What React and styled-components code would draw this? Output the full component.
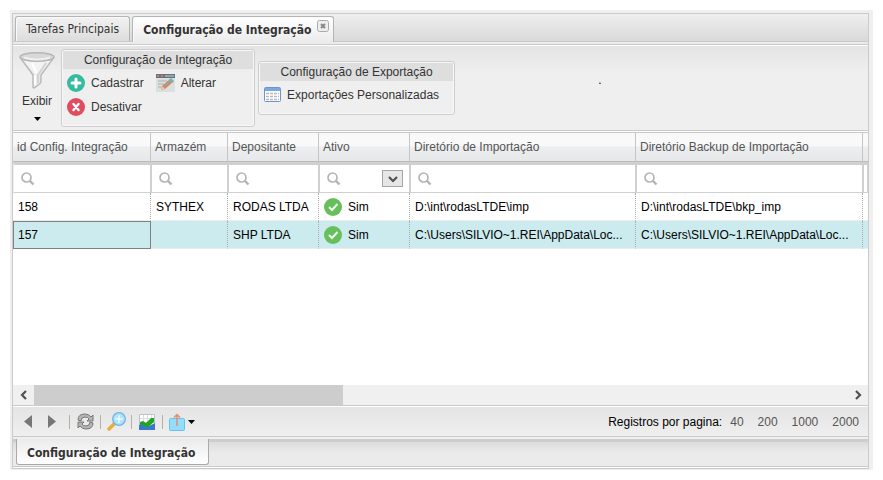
import React from "react";
import styled, { createGlobalStyle, css } from "styled-components";

const GlobalStyle = createGlobalStyle`
  * {
    box-sizing: border-box;
  }
  body {
    margin: 0;
    background: #fff;
    color: #333;
    font: 12px/16px "Liberation Sans", Arial, sans-serif;
  }
  button, input, select {
    font: inherit;
    color: inherit;
  }
`;

const tabFont = css`
  font-family: "DejaVu Sans Condensed", "DejaVu Sans", Tahoma, sans-serif;
  font-size: 12px;
`;

const Page = styled.div`
  display: flex;
  min-height: 100vh;
  padding: 10px;
`;

const Frame = styled.div`
  display: flex;
  flex: 1;
  min-width: 0;
  padding: 3px 4px 1px 2px;
  background: #efefef;
`;

const Panel = styled.main`
  display: flex;
  flex: 1;
  flex-direction: column;
  min-width: 0;
  border: 1px solid #cacaca;
`;

const TabBar = styled.nav`
  display: flex;
  align-items: flex-end;
  gap: 2px;
  height: 31px;
  padding: 0 2px 2px;
  border-bottom: 1px solid #cacaca;
  background: linear-gradient(#efefef, #d9d9d9 27px, #cacaca 27px, #cacaca 28px, #ebebeb 28px);
`;

const Tab = styled.button`
  ${tabFont}
  display: flex;
  align-items: center;
  gap: 6px;
  height: 25px;
  margin-bottom: 1px;
  padding: 0 10px;
  border: 1px solid #b4b4b4;
  border-bottom: 0;
  border-radius: 3px 3px 0 0;
  background: linear-gradient(#f2f2f2, #dcdcdc);
  box-shadow: inset 1px 1px #fafafa;
  white-space: nowrap;
  ${(props) =>
    props.$active &&
    css`
      height: 26px;
      margin-bottom: 0;
      padding: 0 4px 0 10px;
      background: linear-gradient(#fff, #ebebeb);
      font-weight: bold;
    `}
`;

const CloseIcon = styled.svg`
  width: 12px;
  height: 12px;
  margin-bottom: 7px;
`;

const Toolbar = styled.div`
  display: flex;
  align-items: center;
  gap: 3px;
  height: 86px;
  padding: 0 6px;
  border-bottom: 1px solid #cacaca;
  background: linear-gradient(#fff 1px, #e4e4e4 1px, #efefef 28px);
`;

const ShowButton = styled.button`
  display: flex;
  flex-direction: column;
  align-items: center;
  gap: 4px;
  margin-right: 3px;
  padding: 0 0 2px;
  border: 0;
  background: none;
`;

const ShowLabel = styled.span`
  margin-bottom: 4px;
`;

const Group = styled.fieldset`
  min-width: 0;
  margin: 0;
  padding: 1px;
  border: 1px solid #cdcdcd;
  border-radius: 3px;
  box-shadow: inset 0 0 0 1px #f8f8f8;
`;

const GroupTitle = styled.div`
  height: 18px;
  background: #dedede;
  line-height: 18px;
  text-align: center;
`;

const GroupBody = styled.div`
  display: grid;
  grid-template-columns: ${(props) => props.$columns};
  gap: 4px 12px;
  padding: 4px ${(props) => props.$end} 8px 4px;
`;

const ToolButton = styled.button`
  display: flex;
  align-items: center;
  gap: 6px;
  height: 20px;
  padding: 0;
  border: 0;
  background: none;
  white-space: nowrap;
`;

const Note = styled.span`
  margin-left: 140px;
  padding-bottom: 16px;
  color: #000;
`;

const Grid = styled.div`
  flex: 1;
  min-height: 180px;
  border-top: 1px solid #cacaca;
  box-shadow: 0 -1px #fff;
  margin-top: 1px;
  overflow: hidden;
  background: #fff;
`;

const Table = styled.table`
  width: 100%;
  table-layout: fixed;
  border-collapse: separate;
  border-spacing: 0;
`;

const HeadCell = styled.th`
  height: 29px;
  padding: 0 4px;
  border-right: 1px solid #c5c5c5;
  border-bottom: 1px solid #bcbcbc;
  background: linear-gradient(#f9f9f9 45%, #eceef0 50%, #e6e8ea);
  color: #555;
  font-weight: normal;
  text-align: left;
  white-space: nowrap;
  overflow: hidden;
  &:last-child {
    border-right: 0;
  }
`;

const FilterCell = styled.td`
  height: 31px;
  padding: 0;
  border: 1px solid #d0d0d0;
  border-width: 3px 1px 1px;
  &:first-child {
    border-left-color: #efefef;
  }
`;

const FilterBox = styled.label`
  display: flex;
  align-items: center;
  padding: 0 6px 0 7px;
`;

const FilterInput = styled.input`
  flex: 1;
  width: 0;
  min-width: 0;
  height: 20px;
  padding: 0 2px;
  border: 0;
  background: none;
  outline: 0;
`;

const FilterMenu = styled.button`
  width: 21px;
  height: 17px;
  padding: 0;
  border: 1px solid #a5a5a5;
  background: #e6e6e6;
  line-height: 0;
`;

const Row = styled.tr`
  background: ${(props) => (props.$selected ? "#cbebee" : "#fff")};
  color: #000;
`;

const Cell = styled.td`
  height: 28px;
  padding: 0 4px 0 5px;
  border-right: 1px dotted #aaa;
  border-bottom: 1px solid #ededed;
  overflow: hidden;
  white-space: nowrap;
  &:last-child {
    border-right: 0;
  }
  ${(props) =>
    props.$focused &&
    css`
      outline: 1px solid #808080;
      outline-offset: -1px;
    `}
`;

const Status = styled.div`
  display: flex;
  align-items: center;
  gap: 6px;
`;

const ScrollBar = styled.div`
  display: flex;
  justify-content: space-between;
  height: 20px;
  background: #f0f0f0;
`;

const ScrollButton = styled.button`
  width: 21px;
  padding: 0;
  border: 0;
  background: none;
  line-height: 0;
`;

const ScrollTrack = styled.div`
  flex: 1;
`;

const ScrollThumb = styled.div`
  width: 38%;
  height: 100%;
  background: #cdcdcd;
`;

const Footer = styled.footer`
  display: flex;
  align-items: center;
  height: 32px;
  padding: 1px 9px 0 8px;
  border: 1px solid #cacaca;
  border-width: 1px 0;
  background: linear-gradient(#fff 1px, #e4e4e4 1px, #efefef);
`;

const PageArrows = styled.div`
  display: flex;
  gap: 10px;
  margin-right: 5px;
`;

const IconButton = styled.button`
  display: flex;
  align-items: center;
  justify-content: center;
  gap: 2px;
  width: ${(props) => props.$width || 20}px;
  height: 22px;
  padding: 0;
  border: 0;
  background: none;
`;

const Separator = styled.i`
  width: 1px;
  height: 14px;
  margin: 0 5px;
  background: #b5b2a4;
`;

const Pager = styled.div`
  display: flex;
  gap: 8px;
  margin-left: auto;
  color: #000;
`;

const PageSizes = styled.div`
  display: flex;
  gap: 14px;
`;

const PageSize = styled.a`
  color: #555;
  text-decoration: none;
`;

const BottomTabs = styled.nav`
  display: flex;
  align-items: flex-start;
  height: 28px;
  margin: 2px 0 1px;
  padding: 0 3px;
  border-bottom: 1px solid #cacaca;
  background: linear-gradient(#cdcdcd 3px, #dcdcdc 3px, #ebebeb 14px);
  box-shadow: 0 1px #fff;
`;

const BottomTab = styled.button`
  ${tabFont}
  height: 26px;
  padding: 3px 13px 0 10px;
  border: 1px solid #aaa;
  border-top: 0;
  border-radius: 0 0 3px 3px;
  background: linear-gradient(#ebebeb, #fff);
  font-weight: bold;
  white-space: nowrap;
`;

const Funnel = () => (
  <svg width="36" height="37" viewBox="0 0 36 37">
    <path d="M1.500 6 14 23v12.500q1 1 2 0l5-4q1-1 1-2V23L34.500 6Z" fill="#e8e8e8" stroke="#b9b9b9" strokeWidth="1.400" />
    <path d="M5 9 16 22h5L31 9" fill="#f3f3f3" />
    <path d="M13 11 18 22M16 23v10" fill="none" stroke="#fff" strokeWidth="2" />
    <path d="m27 11-8 12v8" fill="none" stroke="#d3d3d3" strokeWidth="2" />
    <ellipse cx="18" cy="5" rx="17" ry="4.300" fill="#d8d8d8" stroke="#b5b5b5" strokeWidth="1.400" />
    <path d="M5 5.500q13 4 26 0" fill="none" stroke="#efefef" strokeWidth="2" />
  </svg>
);

const Caret = () => (
  <svg width="7" height="4" viewBox="0 0 7 4">
    <path d="M0 0h7L3.500 4Z" fill="#000" />
  </svg>
);

const AddIcon = () => (
  <svg width="18" height="18" viewBox="0 0 18 18">
    <circle cx="9" cy="9" r="9" fill="#35bba0" />
    <path d="M9 5v8M5 9h8" stroke="#fff" strokeWidth="3" strokeLinecap="round" />
  </svg>
);

const DisableIcon = () => (
  <svg width="18" height="18" viewBox="0 0 18 18">
    <circle cx="9" cy="9" r="9" fill="#df4d60" />
    <path d="m6.500 6 5 6m0-6-5 6" stroke="#fff" strokeWidth="2.400" strokeLinecap="round" />
  </svg>
);

const EditIcon = () => (
  <svg width="19" height="18" viewBox="0 0 19 18">
    <path d="M0 0h19v18H0Z" fill="#dadfdf" />
    <path d="M0 0h19v4H0Z" fill="#69737d" />
    <path d="M1 2h2M5 2h2" stroke="#d9776c" strokeWidth="2" />
    <path d="M9 2h9" stroke="#8fa7ab" strokeWidth="2" />
    <path d="M2 7h9M2 10h6M2 13h4" stroke="#a5b3b3" />
    <path d="m5 16 1-4 8-7 3 3-8 7Z" fill="#ea7d50" />
    <path d="m8 13 7-7" stroke="#6fb7b3" strokeWidth="1.500" />
    <path d="m5 16 1-4 3 3Z" fill="#f1c9a5" />
    <path d="m13 6 2-2 3 3-2 2Z" fill="#6fb7b3" />
  </svg>
);

const TableIcon = () => (
  <svg width="17" height="15" viewBox="0 0 17 15">
    <rect x=".5" y=".5" width="16" height="14" rx="1" fill="#fff" stroke="#6c94d0" />
    <path d="M1 1h15v3H1Z" fill="#7da6e0" />
    <path d="M2 6.500h13M2 9.500h13M2 12.500h13" stroke="#b9b9b9" strokeWidth="1.500" strokeDasharray="3 1" />
  </svg>
);

const SearchIcon = () => (
  <svg width="14" height="14" viewBox="0 0 14 14">
    <circle cx="5.500" cy="5.500" r="4.500" fill="none" stroke="#b4b4b4" strokeWidth="1.700" />
    <path d="m8.500 8.500 4 4" stroke="#b4b4b4" strokeWidth="2.400" />
  </svg>
);

const CheckIcon = () => (
  <svg width="18" height="18" viewBox="0 0 18 18">
    <circle cx="9" cy="9" r="9" fill="#66bf5b" />
    <path d="m5 9 3 3 5.500-6" fill="none" stroke="#f0faee" strokeWidth="2" />
  </svg>
);

const Chevron = ({ d }) => (
  <svg width="12" height="12" viewBox="0 0 12 12">
    <path d={d} fill="none" stroke="#505050" strokeWidth="2.200" />
  </svg>
);

const Arrow = ({ d }) => (
  <svg width="8" height="13" viewBox="0 0 8 13">
    <path d={d} fill="#777" />
  </svg>
);

const RefreshIcon = () => (
  <svg width="17" height="17" viewBox="0 0 17 17">
    <path d="M1 7q0-6 7-6 4 0 6 3l2-2v6h-6l2-2q-1-2-4-2-4 0-4 4Z" fill="#b5b5b5" stroke="#777" />
    <path d="M16 10q0 6-7 6-4 0-6-3l-2 2V9h6l-2 2q1 2 4 2 4 0 4-4Z" fill="#b5b5b5" stroke="#777" />
  </svg>
);

const ZoomIcon = () => (
  <svg width="19" height="19" viewBox="0 0 19 19">
    <path d="m2 17 5-5" stroke="#e8ad3a" strokeWidth="3.500" strokeLinecap="round" />
    <circle cx="12" cy="7" r="6.300" fill="#aee4fb" stroke="#6db4ec" strokeWidth="1.300" />
    <path d="M12 3v8M8 7h8" stroke="#e8f9ff" strokeWidth="1.500" />
  </svg>
);

const ChartIcon = () => (
  <svg width="16" height="16" viewBox="0 0 16 16">
    <path d="M.5.500h15v15H.5Z" fill="#fff" stroke="#b9c3d0" />
    <path d="M4.500 1v9M8.500 1v9M12.500 1v9M1 4.500h14M1 8.500h14" stroke="#ddd" />
    <path d="m0 11 4-1 4 3 8-4v7H0Z" fill="#3a78cf" />
    <path d="m1 8 3-1 3 2 5-5 3 0v4l-7 6-4-3-3 0Z" fill="#21a323" />
  </svg>
);

const ExportIcon = () => (
  <svg width="17" height="18" viewBox="0 0 17 18">
    <rect x=".5" y="5.500" width="15" height="12" rx="1" fill="#96dcfb" stroke="#67c2ee" />
    <path d="M8 13V2M5 4.500l3-3 3 3" fill="none" stroke="#e18d76" strokeWidth="1.500" />
  </svg>
);

const columns = [
  { title: "id Config. Integração", width: 138 },
  { title: "Armazém", width: 77 },
  { title: "Depositante", width: 91 },
  { title: "Ativo", width: 91, menu: true },
  { title: "Diretório de Importação", width: 226 },
  { title: "Diretório Backup de Importação", width: 227 },
  { title: "" },
];

const rows = [
  ["158", "SYTHEX", "RODAS LTDA", "Sim", "D:\\int\\rodasLTDE\\imp", "D:\\int\\rodasLTDE\\bkp_imp", ""],
  [
    "157",
    "",
    "SHP LTDA",
    "Sim",
    "C:\\Users\\SILVIO~1.REI\\AppData\\Loc...",
    "C:\\Users\\SILVIO~1.REI\\AppData\\Loc...",
    "",
  ],
];

const pageSizes = [40, 200, 1000, 2000];

const IntegrationGrid = () => (
  <Grid>
    <Table>
      <colgroup>
        {columns.map((column, i) => (
          <col key={i} width={column.width} />
        ))}
      </colgroup>
      <thead>
        <tr>
          {columns.map((column, i) => (
            <HeadCell key={i}>{column.title}</HeadCell>
          ))}
        </tr>
      </thead>
      <tbody>
        <tr>
          {columns.map((column, i) => (
            <FilterCell key={i}>
              {column.title && (
                <FilterBox>
                  <SearchIcon />
                  <FilterInput aria-label={column.title} />
                  {column.menu && (
                    <FilterMenu aria-label="Ativo">
                      <Chevron d="m2 4 4 4 4-4" />
                    </FilterMenu>
                  )}
                </FilterBox>
              )}
            </FilterCell>
          ))}
        </tr>
        {rows.map((row, r) => (
          <Row key={row[0]} $selected={r === 1}>
            {row.map((value, i) => (
              <Cell key={i} $focused={r === 1 && i === 0}>
                {i === 3 ? (
                  <Status>
                    <CheckIcon />
                    {value}
                  </Status>
                ) : (
                  value
                )}
              </Cell>
            ))}
          </Row>
        ))}
      </tbody>
    </Table>
  </Grid>
);

export default function App() {
  return (
    <Page>
      <GlobalStyle />
      <Frame>
        <Panel>
          <TabBar>
            <Tab>Tarefas Principais</Tab>
            <Tab $active>
              Configuração de Integração
              <CloseIcon viewBox="0 0 12 12">
                <rect x=".5" y=".5" width="11" height="11" rx="2" fill="#eee" stroke="#aaa" />
                <path d="m4 4 4 4m0-4-4 4" stroke="#888" strokeWidth="2" />
              </CloseIcon>
            </Tab>
          </TabBar>
          <Toolbar>
            <ShowButton>
              <Funnel />
              <ShowLabel>Exibir</ShowLabel>
              <Caret />
            </ShowButton>
            <Group aria-label="Configuração de Integração">
              <GroupTitle>Configuração de Integração</GroupTitle>
              <GroupBody $columns="auto auto" $end="37px">
                <ToolButton>
                  <AddIcon />
                  Cadastrar
                </ToolButton>
                <ToolButton>
                  <EditIcon />
                  Alterar
                </ToolButton>
                <ToolButton>
                  <DisableIcon />
                  Desativar
                </ToolButton>
              </GroupBody>
            </Group>
            <Group aria-label="Configuração de Exportação">
              <GroupTitle>Configuração de Exportação</GroupTitle>
              <GroupBody $columns="auto" $end="14px">
                <ToolButton>
                  <TableIcon />
                  Exportações Personalizadas
                </ToolButton>
              </GroupBody>
            </Group>
            <Note>.</Note>
          </Toolbar>
          <IntegrationGrid />
          <ScrollBar>
            <ScrollButton aria-label="Rolar para a esquerda">
              <Chevron d="M8 2 4 6l4 4" />
            </ScrollButton>
            <ScrollTrack>
              <ScrollThumb />
            </ScrollTrack>
            <ScrollButton aria-label="Rolar para a direita">
              <Chevron d="m4 2 4 4-4 4" />
            </ScrollButton>
          </ScrollBar>
          <Footer>
            <PageArrows>
              <IconButton $width={14} aria-label="Página anterior">
                <Arrow d="M8 0v13L0 6.500Z" />
              </IconButton>
              <IconButton $width={14} aria-label="Próxima página">
                <Arrow d="M0 0v13l8-6.500Z" />
              </IconButton>
            </PageArrows>
            <Separator />
            <IconButton aria-label="Atualizar">
              <RefreshIcon />
            </IconButton>
            <Separator />
            <IconButton aria-label="Pesquisar">
              <ZoomIcon />
            </IconButton>
            <Separator />
            <IconButton aria-label="Gráfico">
              <ChartIcon />
            </IconButton>
            <Separator />
            <IconButton $width={28} aria-label="Exportar">
              <ExportIcon />
              <Caret />
            </IconButton>
            <Pager>
              <span>Registros por pagina:</span>
              <PageSizes>
                {pageSizes.map((size) => (
                  <PageSize href="#" key={size}>
                    {size}
                  </PageSize>
                ))}
              </PageSizes>
            </Pager>
          </Footer>
          <BottomTabs>
            <BottomTab>Configuração de Integração</BottomTab>
          </BottomTabs>
        </Panel>
      </Frame>
    </Page>
  );
}
